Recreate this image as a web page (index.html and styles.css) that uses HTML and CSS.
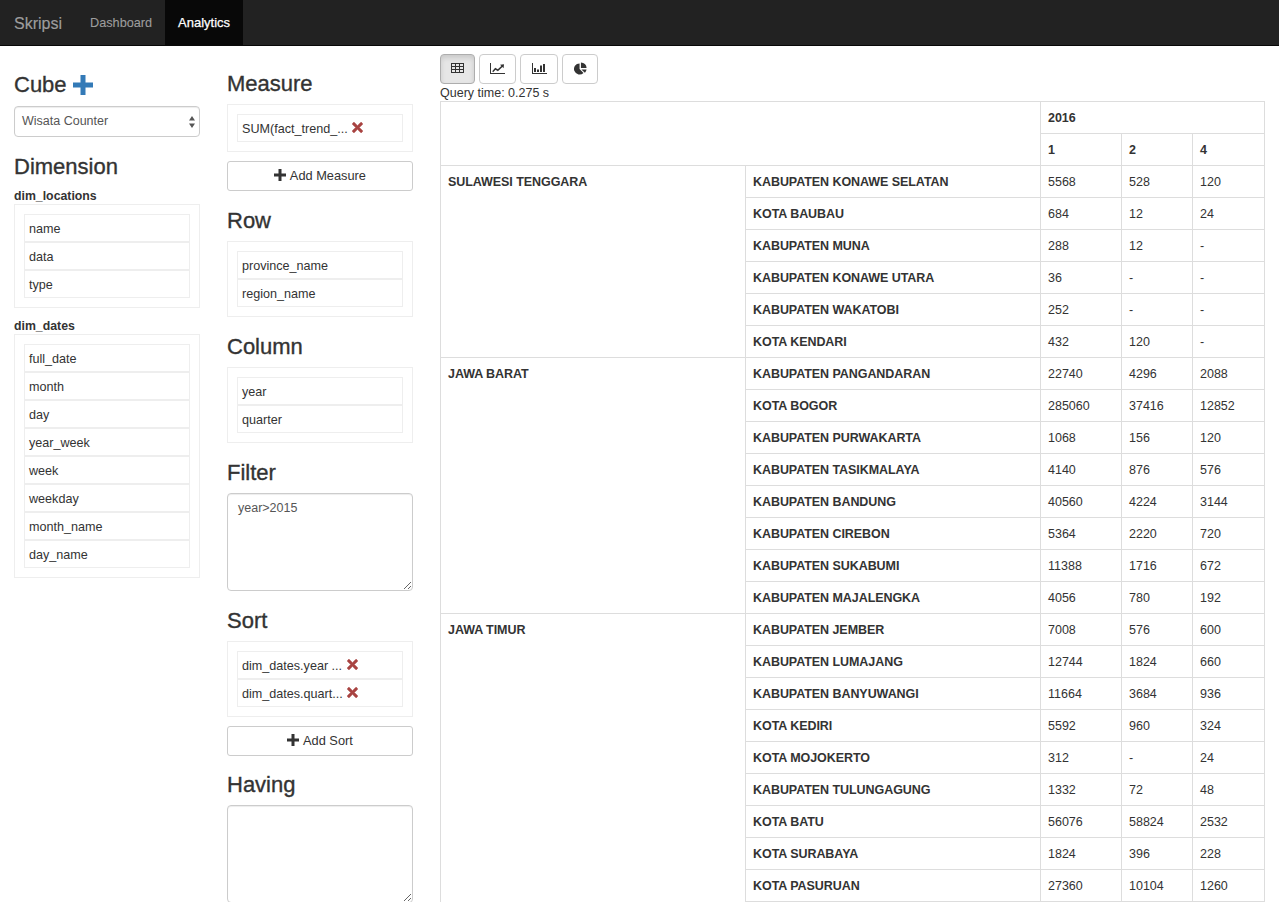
FILE: index.html
```html
<!DOCTYPE html>
<html lang="en">
<head>
<meta charset="utf-8">
<title>Skripsi</title>
<link rel="stylesheet" href="styles.css">
</head>
<body>
<svg class="defs" width="0" height="0" aria-hidden="true">
  <symbol id="plus" viewBox="0 0 12 12"><path d="M4.500 0h3v4.500H12v3H7.500V12h-3V7.500H0v-3h4.500z"/></symbol>
  <symbol id="cross" viewBox="0 0 12 12"><path d="M2.600.6 6 4 9.400.6a.8.8 0 0 1 1.100 0l.9.9a.8.8 0 0 1 0 1.100L8 6l3.400 3.400a.8.8 0 0 1 0 1.100l-.9.9a.8.8 0 0 1-1.100 0L6 8l-3.400 3.400a.8.8 0 0 1-1.100 0l-.9-.9a.8.8 0 0 1 0-1.100L4 6 .6 2.600a.8.8 0 0 1 0-1.100l.9-.9a.8.8 0 0 1 1.100 0z"/></symbol>
</svg>
<nav class="navbar">
  <a class="brand">Skripsi</a>
  <a class="nav-link">Dashboard</a>
  <a class="nav-link active">Analytics</a>
</nav>
<main class="layout">
  <aside class="col col-cube">
    <h3 class="heading heading-cube">Cube <svg class="icon-add"><use href="#plus"/></svg></h3>
    <div class="select"><span>Wisata Counter</span>
      <svg class="select-arrows" viewBox="0 0 6 12"><path d="M3 0l3 4.500H0zM3 12L0 7.500h6z"/></svg>
    </div>
    <h3 class="heading heading-dim">Dimension</h3>
    <div class="group-title">dim_locations</div>
    <ul class="well">
      <li class="item">name</li><li class="item">data</li><li class="item">type</li>
    </ul>
    <div class="group-title group-title-next">dim_dates</div>
    <ul class="well">
      <li class="item">full_date</li><li class="item">month</li><li class="item">day</li><li class="item">year_week</li><li class="item">week</li><li class="item">weekday</li><li class="item">month_name</li><li class="item">day_name</li>
    </ul>
  </aside>
  <section class="col col-query">
    <h3 class="heading">Measure</h3>
    <ul class="well">
      <li class="item">SUM(fact_trend_... <svg class="icon-remove"><use href="#cross"/></svg></li>
    </ul>
    <button class="btn-add"><svg class="icon-plus"><use href="#plus"/></svg> Add Measure</button>
    <h3 class="heading heading-after-btn">Row</h3>
    <ul class="well">
      <li class="item">province_name</li><li class="item">region_name</li>
    </ul>
    <h3 class="heading heading-after-well">Column</h3>
    <ul class="well">
      <li class="item">year</li><li class="item">quarter</li>
    </ul>
    <h3 class="heading heading-after-well">Filter</h3>
    <textarea class="textarea">year&gt;2015</textarea>
    <h3 class="heading heading-after-area">Sort</h3>
    <ul class="well">
      <li class="item">dim_dates.year ... <svg class="icon-remove"><use href="#cross"/></svg></li>
      <li class="item">dim_dates.quart... <svg class="icon-remove"><use href="#cross"/></svg></li>
    </ul>
    <button class="btn-add"><svg class="icon-plus"><use href="#plus"/></svg> Add Sort</button>
    <h3 class="heading heading-last">Having</h3>
    <textarea class="textarea"></textarea>
  </section>
  <section class="col col-result">
    <div class="toolbar">
      <button class="btn-view w35 active"><svg class="ico-table" viewBox="0 0 13 10"><path fill-rule="evenodd" d="M0 0h13v10H0zM1 1v2h3V1zM5 1v2h3V1zM9 1v2h3V1zM1 4v2h3V4zM5 4v2h3V4zM9 4v2h3V4zM1 7v2h3V7zM5 7v2h3V7zM9 7v2h3V7z"/></svg></button>
      <button class="btn-view w37"><svg class="ico-chart" viewBox="0 0 15 11"><path d="M0 0h1v10h14v1H0z"/><path d="M2.200 8.200 5.200 4.800 7.800 6.300 11.300 3 10 1.800 14 1.200 13.600 5.200 12.400 4 7.900 8.200 5.500 6.800 3.200 9.200z"/></svg></button>
      <button class="btn-view w38"><svg class="ico-chart" viewBox="0 0 15 11"><path d="M0 0h1v10h14v1H0zM2 5h2v4H2zM5 6.500h2V9H5zM8 2.500h2V9H8zM11 1h2v8h-2z"/></svg></button>
      <button class="btn-view w36"><svg class="ico-pie" viewBox="0 0 14 14"><path d="M6 1.500V7.500l4.200 4.300A6 6 0 1 1 6 1.500z"/><path d="M7.500 0.500a6 6 0 0 1 6 6h-6z"/><path d="M8 8h5.500a6 6 0 0 1-1.500 3.200l-.3.300z"/></svg></button>
    </div>
    <div class="query-time">Query time: 0.275 s</div>
    <table class="pivot">
      <colgroup><col class="c-prov"><col class="c-reg"><col class="c-a"><col class="c-b"><col class="c-c"></colgroup>
      <thead>
        <tr><th colspan="2" rowspan="2"></th><th colspan="3">2016</th></tr>
        <tr><th>1</th><th>2</th><th>4</th></tr>
      </thead>
      <tbody>
        <tr><th rowspan="6">SULAWESI TENGGARA</th><th>KABUPATEN KONAWE SELATAN</th><td>5568</td><td>528</td><td>120</td></tr>
        <tr><th>KOTA BAUBAU</th><td>684</td><td>12</td><td>24</td></tr>
        <tr><th>KABUPATEN MUNA</th><td>288</td><td>12</td><td>-</td></tr>
        <tr><th>KABUPATEN KONAWE UTARA</th><td>36</td><td>-</td><td>-</td></tr>
        <tr><th>KABUPATEN WAKATOBI</th><td>252</td><td>-</td><td>-</td></tr>
        <tr><th>KOTA KENDARI</th><td>432</td><td>120</td><td>-</td></tr>
        <tr><th rowspan="8">JAWA BARAT</th><th>KABUPATEN PANGANDARAN</th><td>22740</td><td>4296</td><td>2088</td></tr>
        <tr><th>KOTA BOGOR</th><td>285060</td><td>37416</td><td>12852</td></tr>
        <tr><th>KABUPATEN PURWAKARTA</th><td>1068</td><td>156</td><td>120</td></tr>
        <tr><th>KABUPATEN TASIKMALAYA</th><td>4140</td><td>876</td><td>576</td></tr>
        <tr><th>KABUPATEN BANDUNG</th><td>40560</td><td>4224</td><td>3144</td></tr>
        <tr><th>KABUPATEN CIREBON</th><td>5364</td><td>2220</td><td>720</td></tr>
        <tr><th>KABUPATEN SUKABUMI</th><td>11388</td><td>1716</td><td>672</td></tr>
        <tr><th>KABUPATEN MAJALENGKA</th><td>4056</td><td>780</td><td>192</td></tr>
        <tr><th rowspan="10">JAWA TIMUR</th><th>KABUPATEN JEMBER</th><td>7008</td><td>576</td><td>600</td></tr>
        <tr><th>KABUPATEN LUMAJANG</th><td>12744</td><td>1824</td><td>660</td></tr>
        <tr><th>KABUPATEN BANYUWANGI</th><td>11664</td><td>3684</td><td>936</td></tr>
        <tr><th>KOTA KEDIRI</th><td>5592</td><td>960</td><td>324</td></tr>
        <tr><th>KOTA MOJOKERTO</th><td>312</td><td>-</td><td>24</td></tr>
        <tr><th>KABUPATEN TULUNGAGUNG</th><td>1332</td><td>72</td><td>48</td></tr>
        <tr><th>KOTA BATU</th><td>56076</td><td>58824</td><td>2532</td></tr>
        <tr><th>KOTA SURABAYA</th><td>1824</td><td>396</td><td>228</td></tr>
        <tr><th>KOTA PASURUAN</th><td>27360</td><td>10104</td><td>1260</td></tr>
        <tr><th></th><td></td><td></td><td></td></tr>
      </tbody>
    </table>
  </section>
</main>
</body>
</html>
```
FILE: styles.css
```css
* { box-sizing: border-box; }
html, body { height: 902px; overflow: hidden; }
body {
  margin: 0;
  font-family: "Liberation Sans", Arial, sans-serif;
  font-size: 13px;
  line-height: 18px;
  color: #333;
  background: #fff;
}
.defs { position: absolute; }

.navbar {
  display: flex;
  height: 46px;
  background: #222;
  border-bottom: 1px solid #080808;
}
.brand {
  padding: 15px 15px 0 14px;
  font-size: 16px;
  line-height: 18px;
  color: #9d9d9d;
  -webkit-text-stroke: .15px #9d9d9d;
}
.nav-link {
  padding: 15px 13px 0;
  font-size: 12.7px;
  line-height: 17px;
  color: #9d9d9d;
  -webkit-text-stroke: .1px #9d9d9d;
}
.nav-link.active {
  padding-top: 14px;
  background: #080808;
  color: #fff;
  font-size: 13px;
  -webkit-text-stroke: .25px #fff;
}

.layout {
  display: grid;
  grid-template-columns: 186px 186px 825px;
  column-gap: 27px;
  padding: 0 14px;
}
.col { min-width: 0; }

.heading {
  margin: 0 0 8px;
  font-size: 22px;
  line-height: 24px;
  font-weight: 500;
  color: #333;
  -webkit-text-stroke: .35px #333;
}
.col-query .heading:first-child { margin-top: 26px; }
.heading-cube { margin-top: 27px; margin-bottom: 9px; display: flex; align-items: center; gap: 6px; }
.icon-add { width: 20px; height: 20px; fill: #337ab7; }
.heading-dim { margin-top: 18px; margin-bottom: 10px; }
.heading-after-btn { margin-top: 18px; }
.heading-after-well { margin-top: 18px; }
.heading-after-area { margin-top: 18px; }
.heading-last { margin-top: 17px; }

.select {
  position: relative;
  height: 31px;
  padding: 5px 7px;
  border: 1px solid #ccc;
  border-radius: 4px;
  font-size: 12.5px;
  color: #555;
  box-shadow: inset 0 1px 1px rgba(0,0,0,.075);
}
.select-arrows { position: absolute; right: 4px; top: 9px; width: 6px; height: 12px; fill: #555; }

.group-title { font-size: 12.3px; font-weight: 700; line-height: 14px; margin-bottom: 1px; }
.group-title-next { margin-top: 11px; }

.well {
  list-style: none;
  margin: 0;
  padding: 9px;
  border: 1px solid #eee;
}
.item {
  height: 28px;
  padding: 5px 4px 3px;
  border: 1px solid #eee;
  font-size: 12.6px;
  line-height: 18px;
  white-space: nowrap;
}
.icon-remove {
  width: 11px;
  height: 11px;
  fill: #a94442;
  stroke: #a94442;
  stroke-width: .6;
  margin-left: 1px;
  vertical-align: 0;
}

.btn-add {
  display: block;
  width: 100%;
  height: 30px;
  margin-top: 9px;
  border: 1px solid #ccc;
  border-radius: 3px;
  background: #fff;
  font: 12.8px/18px "Liberation Sans", Arial, sans-serif;
  color: #333;
}
.icon-plus { width: 12px; height: 12px; fill: #333; vertical-align: -1px; margin-right: 1px; }

.textarea {
  display: block;
  width: 100%;
  height: 98px;
  padding: 5px 10px;
  border: 1px solid #ccc;
  border-radius: 4px;
  font: 12.5px/18px "Liberation Sans", Arial, sans-serif;
  color: #555;
  box-shadow: inset 0 1px 1px rgba(0,0,0,.075);
}

.toolbar { display: flex; gap: 4px; padding-top: 8px; }
.btn-view {
  display: flex;
  align-items: center;
  justify-content: center;
  height: 30px;
  padding: 0 0 2px;
  border: 1px solid #ccc;
  border-radius: 4px;
  background: #fff;
}
.w35 { width: 35px; }
.w36 { width: 36px; }
.w37 { width: 37px; }
.w38 { width: 38px; }
.btn-view svg { fill: #333; }
.ico-table { width: 13px; height: 10px; }
.ico-chart { width: 15px; height: 11px; }
.ico-pie { width: 13px; height: 13px; }
.btn-view.active {
  background: #e6e6e6;
  border-color: #adadad;
  box-shadow: inset 0 3px 5px rgba(0,0,0,.125);
}
.query-time { height: 17px; line-height: 19px; font-size: 12.5px; }

.pivot {
  width: 824px;
  table-layout: fixed;
  border-collapse: collapse;
  font-size: 12.5px;
  line-height: 17px;
}
.c-prov { width: 305px; }
.c-reg { width: 295px; }
.c-a { width: 81px; }
.c-b { width: 71px; }
.c-c { width: 72px; }
.pivot th, .pivot td {
  height: 32px;
  padding: 8px 7px 6px;
  border: 1px solid #ddd;
  text-align: left;
  vertical-align: top;
  white-space: nowrap;
}
.pivot th { font-weight: 700; letter-spacing: -.005em; }
```
